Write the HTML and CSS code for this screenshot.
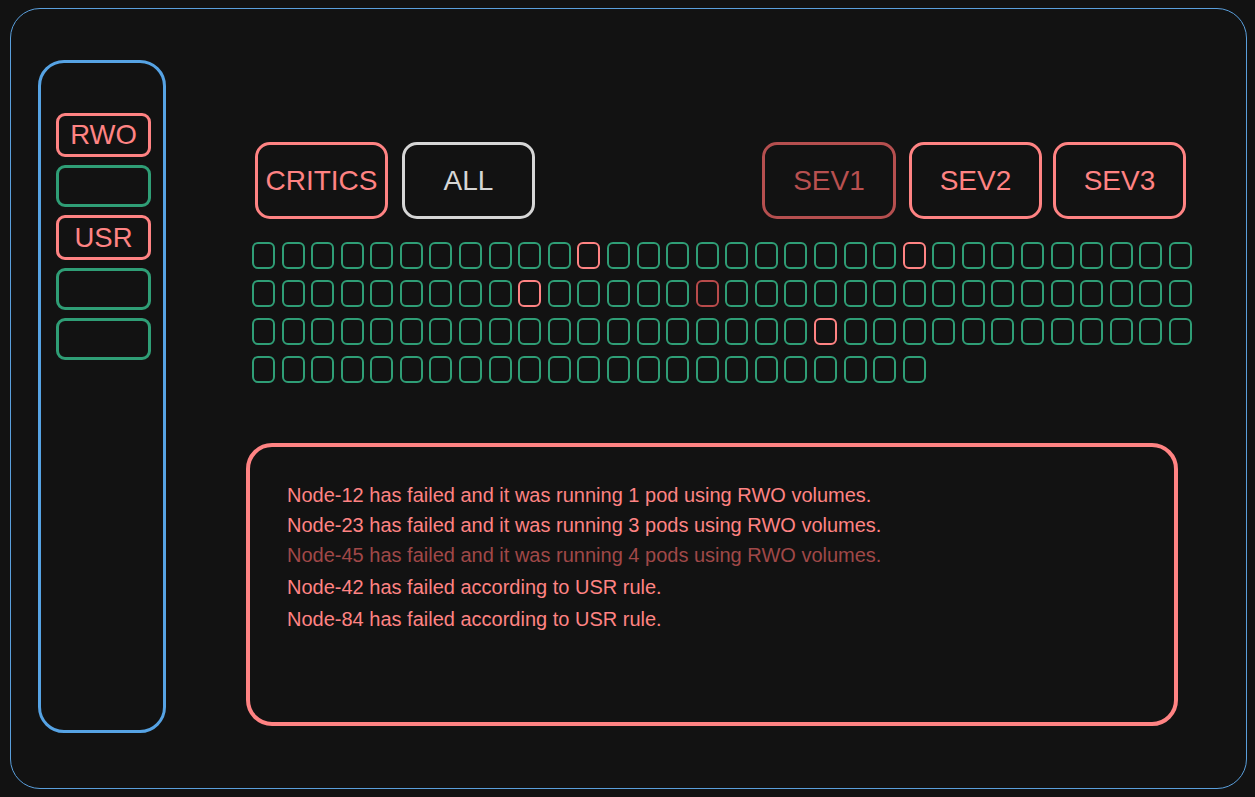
FILE: index.html
```html
<!DOCTYPE html>
<html>
<head>
<meta charset="utf-8">
<link rel="stylesheet" href="styles.css">
</head>
<body>
<div class="frame">
  <aside class="sidebar">
    <div class="tag tag-red tag-rwo">RWO</div>
    <div class="tag tag-green"></div>
    <div class="tag tag-red tag-usr">USR</div>
    <div class="tag tag-green"></div>
    <div class="tag tag-green"></div>
  </aside>
  <main class="main">
    <div class="toolbar">
      <div class="group">
        <div class="btn btn-red">CRITICS</div>
        <div class="btn btn-grey">ALL</div>
      </div>
      <div class="group group-right">
        <div class="btn btn-dark">SEV1</div>
        <div class="btn btn-red btn-sev2">SEV2</div>
        <div class="btn btn-red">SEV3</div>
      </div>
    </div>
    <div class="grid" id="grid"></div>
    <div class="log">
      <div class="line">Node-12 has failed and it was running 1 pod using RWO volumes.</div>
      <div class="line">Node-23 has failed and it was running 3 pods using RWO volumes.</div>
      <div class="line line-dim">Node-45 has failed and it was running 4 pods using RWO volumes.</div>
      <div class="line line-gap">Node-42 has failed according to USR rule.</div>
      <div class="line line-gap">Node-84 has failed according to USR rule.</div>
    </div>
  </main>
</div>
<script src="script.js"></script>
</body>
</html>
```

FILE: script.js
```js
(function () {
  var grid = document.getElementById('grid');
  var total = 32 * 3 + 23;
  var red = { 11: 'red', 22: 'red', 41: 'red', 47: 'dark', 83: 'red' };
  for (var i = 0; i < total; i++) {
    var d = document.createElement('div');
    d.className = 'cell' + (red[i] === 'red' ? ' cell-red' : red[i] === 'dark' ? ' cell-dark' : '');
    grid.appendChild(d);
  }
})();
```

FILE: styles.css
```css
html, body {
  margin: 0;
  padding: 0;
  background: #121212;
}
body {
  font-family: "Liberation Sans", Arial, sans-serif;
  width: 1255px;
  height: 797px;
  overflow: hidden;
}
.frame {
  box-sizing: border-box;
  margin: 8px 0 0 10px;
  width: 1237px;
  height: 781px;
  border: 1px solid #5a9fdc;
  border-radius: 30px;
  display: flex;
  align-items: flex-start;
}
.sidebar {
  box-sizing: border-box;
  margin: 51px 0 0 27px;
  width: 128px;
  height: 673px;
  border: 3px solid #56a3e4;
  border-radius: 26px;
  padding: 50px 0 0 15px;
  display: flex;
  flex-direction: column;
  gap: 8px;
  flex-shrink: 0;
}
.tag {
  box-sizing: border-box;
  width: 95px;
  height: 42px;
  border: 3px solid;
  border-radius: 9px;
  display: flex;
  align-items: center;
  justify-content: center;
  font-size: 27.5px;
  color: #ff8383;
}
.tag-red { border-color: #ff8383; }
.tag-green { border-color: #2f9e76; }
.tag-rwo { height: 44px; }
.tag-usr { height: 45px; }
.main {
  margin-left: 80px;
  padding-top: 133px;
  width: 947px;
  display: flex;
  flex-direction: column;
}
.toolbar {
  display: flex;
  justify-content: space-between;
  padding: 0 7px 0 9px;
}
.group {
  display: flex;
  gap: 14px;
}
.group-right { gap: 11px; }
.btn {
  box-sizing: border-box;
  width: 133px;
  height: 77px;
  border: 3px solid;
  border-radius: 15px;
  display: flex;
  align-items: center;
  justify-content: center;
  font-size: 28px;
}
.btn-red { border-color: #ff8383; color: #ff8383; }
.btn-grey { border-color: #d6d6d6; color: #d6d6d6; }
.btn-dark { border-color: #b54f4f; color: #b85050; width: 134px; }
.btn-sev2 { margin-left: 2px; }
.grid {
  margin: 23px 0 0 6px;
  display: grid;
  grid-template-columns: repeat(32, 23px);
  column-gap: 6.58px;
  row-gap: 11px;
}
.cell {
  box-sizing: border-box;
  width: 23px;
  height: 27px;
  border: 2px solid #2f9e76;
  border-radius: 6px;
}
.cell-red { border-color: #ff8383; }
.cell-dark { border-color: #b84b4b; }
.log {
  box-sizing: border-box;
  margin-top: 60px;
  width: 932px;
  height: 283px;
  border: 4px solid #ff8383;
  border-radius: 26px;
  padding: 33px 0 0 37px;
}
.line {
  font-size: 20px;
  line-height: 30px;
  color: #ff8383;
  white-space: nowrap;
}
.line-dim { color: #a04848; }
.line-gap { margin-top: 2px; }
```
